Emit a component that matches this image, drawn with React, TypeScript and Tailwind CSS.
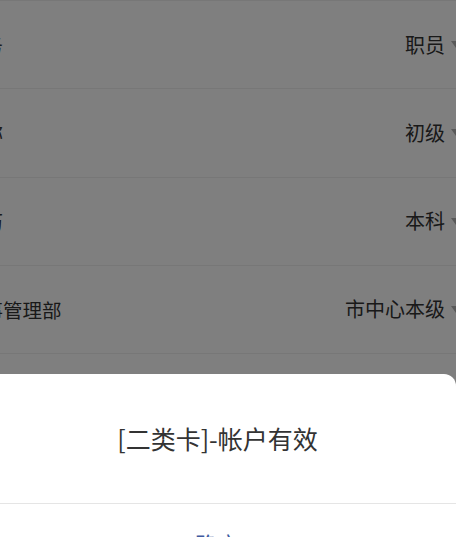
const rows = [
  { label: '职务', value: '职员' },
  { label: '职称', value: '初级' },
  { label: '学历', value: '本科' },
  { label: '人事管理部', value: '市中心本级' },
  { label: '所属网点', value: '营业部' },
]

function Row({ label, value }: { label: string; value: string }) {
  return (
    <div className="flex h-[88.25px] items-center justify-between border-b border-[#eeeeee] pl-[13px] pr-[15px]">
      <span className="text-[19.5px] text-[#333333]">{label}</span>
      <div className="flex items-center">
        <span className="text-[20px] text-[#333333]">{value}</span>
        <span className="ml-[6px] h-0 w-0 border-x-[5px] border-t-[7px] border-x-transparent border-t-[#b5b5b5]" />
      </div>
    </div>
  )
}

export default function App() {
  return (
    <div
      className="relative h-[537px] w-[456px] overflow-hidden bg-white"
      style={{ fontFamily: '"Noto Sans CJK SC", "Noto Sans", sans-serif' }}
    >
      <div className="-ml-[49px] w-[525px] border-t border-[#eeeeee]">
        {rows.map((r) => (
          <Row key={r.label} label={r.label} value={r.value} />
        ))}
      </div>

      <div className="absolute inset-0 bg-black/50" />

      <div className="absolute left-[-21px] top-[374px] w-[477px] rounded-t-[12px] bg-white">
        <div className="flex h-[130px] items-center justify-center border-b border-[#e5e5e5] text-[25px] text-[#333333]">
          [二类卡]-帐户有效
        </div>
        <div className="flex h-[78px] items-center justify-center text-[22px] text-[#3f5aa0]">确定</div>
      </div>
    </div>
  )
}
